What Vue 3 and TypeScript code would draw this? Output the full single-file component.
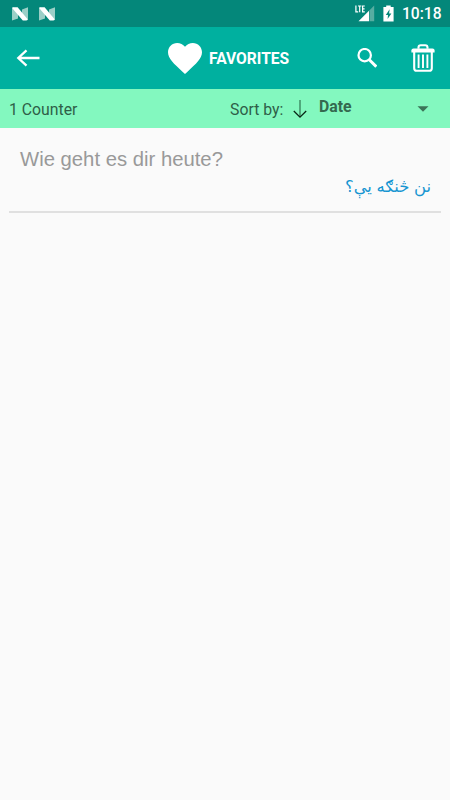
<script setup lang="ts">
interface Favorite {
  source: string
  translation: string
}

const favorites: Favorite[] = [{ source: 'Wie geht es dir heute?', translation: 'نن څنګه یې؟' }]
</script>

<template>
  <div class="screen">
    <div class="status">
      <svg v-for="n in 2" :key="n" class="nougat" viewBox="0 0 16 14">
        <path d="M0 0.3L6 2V11.5L0 13.5ZM10 2.4L16 0.3V13.3L10 11.5Z" fill="#9bcfc7" />
        <path d="M0.8 0.3H5.6L15.6 12.2L14.6 13.4H10.8L0.5 1.5Z" fill="#fff" />
      </svg>
      <svg class="signal" viewBox="0 0 20 17">
        <path d="M14.5 5.2L19.2 0.5V16.2H14.5Z" fill="#57ada1" />
        <path d="M3.5 16.2L14 5.7V16.2Z" fill="#fff" />
        <path d="M0.9 0.5V6.8H3.2M3 1H6.4M4.7 1V7.3M9.8 1H7.6V6.8H9.8M7.6 3.8H9.6" fill="none" stroke="#fff" stroke-width="1.2" />
      </svg>
      <svg class="battery" viewBox="0 0 11 17">
        <path d="M3.2 0.5H7.7V2H10.6V16.5H0.4V2H3.2Z" fill="#fff" />
        <path d="M6.6 4.3L2.8 10H5L4.6 14L8.4 8.4H6.1Z" fill="#04877a" />
      </svg>
      <span class="clock">10:18</span>
    </div>

    <header class="toolbar">
      <svg class="back" viewBox="0 0 24 18">
        <path d="M10.5 1.4L2.3 9L10.5 16.6M2 9H23.5" fill="none" stroke="#fff" stroke-width="2.3" />
      </svg>
      <svg class="heart" viewBox="0 0 34 31">
        <path d="M17 31L14.5 28.7C5.8 20.7 0 15.5 0 9.3C0 4.1 4 0 9.2 0C12.2 0 15.1 1.4 17 3.7C18.9 1.4 21.8 0 24.8 0C30 0 34 4.1 34 9.3C34 15.5 28.2 20.7 19.5 28.7Z" fill="#fff" />
      </svg>
      <h1 class="title">FAVORITES</h1>
      <svg class="search" viewBox="0 0 20 20">
        <circle cx="7.7" cy="7.2" r="6.2" fill="none" stroke="#fff" stroke-width="2.2" />
        <path d="M11.8 11.3L19.3 18.7" stroke="#fff" stroke-width="2.9" />
      </svg>
      <svg class="trash" viewBox="0 0 24 28">
        <path d="M7.5 4.8V3.6C7.5 2 8.3 1.3 9.8 1.3H14.2C15.7 1.3 16.5 2 16.5 3.6V4.8M3.2 8V24.2C3.2 25.9 4.2 26.8 5.8 26.8H18.2C19.8 26.8 20.8 25.9 20.8 24.2V8" fill="none" stroke="#fff" stroke-width="2.1" />
        <path d="M2.5 4.6H21.5Q23.6 4.6 23.6 6.5V8.4H0.4V6.5Q0.4 4.6 2.5 4.6Z" fill="#fff" />
        <path d="M7.6 10.6V24M12 10.6V24M16.4 10.6V24" stroke="#fff" stroke-width="1.9" />
      </svg>
    </header>

    <div class="sortbar">
      <span class="count">{{ favorites.length }} Counter</span>
      <span class="label">Sort by:</span>
      <svg class="down" viewBox="0 0 14 20">
        <path d="M7 1V18" stroke="#357d58" stroke-width="1.3" fill="none" />
        <path d="M0.8 12L7 18.2L13.2 12" stroke="#082516" stroke-width="1.3" fill="none" />
      </svg>
      <span class="value">Date</span>
      <svg class="caret" viewBox="0 0 12 6"><path d="M0.5 0.3H11.5L6 5.8Z" fill="#3b7558" /></svg>
    </div>

    <main class="list">
      <article v-for="item in favorites" :key="item.source" class="item">
        <p class="source">{{ item.source }}</p>
        <p class="translation" dir="rtl" lang="ps">{{ item.translation }}</p>
      </article>
    </main>
  </div>
</template>

<style>
body {
  margin: 0;
  background: #fafafa;
}
</style>

<style scoped>
.screen {
  width: 450px;
  height: 800px;
  overflow: hidden;
  background: #fafafa;
  font-family: Roboto, sans-serif;
}
svg {
  flex: none;
  display: block;
}
.status {
  display: flex;
  align-items: center;
  box-sizing: border-box;
  height: 27px;
  padding: 0 9px 0 12px;
  background: #04877a;
}
.nougat {
  width: 16px;
  height: 14px;
  margin-right: 11px;
}
.signal {
  width: 20px;
  height: 17px;
  margin: 0 8px 0 auto;
}
.battery {
  width: 11px;
  height: 17px;
  margin-right: 8px;
}
.clock {
  width: 39px;
  font-size: 15.6px;
  font-weight: 500;
  line-height: 28px;
  color: #fff;
  white-space: nowrap;
}
.toolbar {
  display: flex;
  align-items: center;
  box-sizing: border-box;
  height: 62px;
  padding: 0 15px 0 16px;
  background: #00b09f;
}
.back {
  width: 24px;
  height: 18px;
}
.heart {
  width: 34px;
  height: 31px;
  margin-left: 128px;
}
.title {
  margin: 2px 0 0 7px;
  font-size: 15.6px;
  font-weight: 700;
  line-height: 20px;
  color: #fff;
}
.search {
  width: 20px;
  height: 20px;
  margin-left: auto;
}
.trash {
  width: 24px;
  height: 28px;
  margin-left: 34px;
}
.sortbar {
  display: flex;
  align-items: center;
  box-sizing: border-box;
  height: 39px;
  padding: 0 21px 0 9px;
  background: #83f8bf;
  color: #2f5f48;
  font-size: 15.8px;
  line-height: 20px;
}
.count {
  width: 221px;
  padding-top: 2px;
}
.label {
  width: 63px;
  padding-top: 2px;
  white-space: nowrap;
}
.down {
  width: 14px;
  height: 20px;
}
.value {
  margin: 0 auto 3px 12px;
  font-size: 15.8px;
  font-weight: 700;
  color: #34694f;
}
.caret {
  width: 12px;
  height: 6px;
}
.list {
  padding: 0 9px;
}
.item {
  box-sizing: border-box;
  height: 85px;
  padding: 19px 10px 0 11px;
  border-bottom: 2px solid #e0e0e0;
}
.item p {
  margin: 0;
}
.source {
  font-family: "Liberation Sans", sans-serif;
  font-size: 20.3px;
  line-height: 24px;
  color: #999;
}
.item .translation {
  margin-top: 3px;
  font-family: "Liberation Sans", "DejaVu Sans", sans-serif;
  font-size: 16.4px;
  line-height: 24px;
  color: #1595d1;
}
</style>
